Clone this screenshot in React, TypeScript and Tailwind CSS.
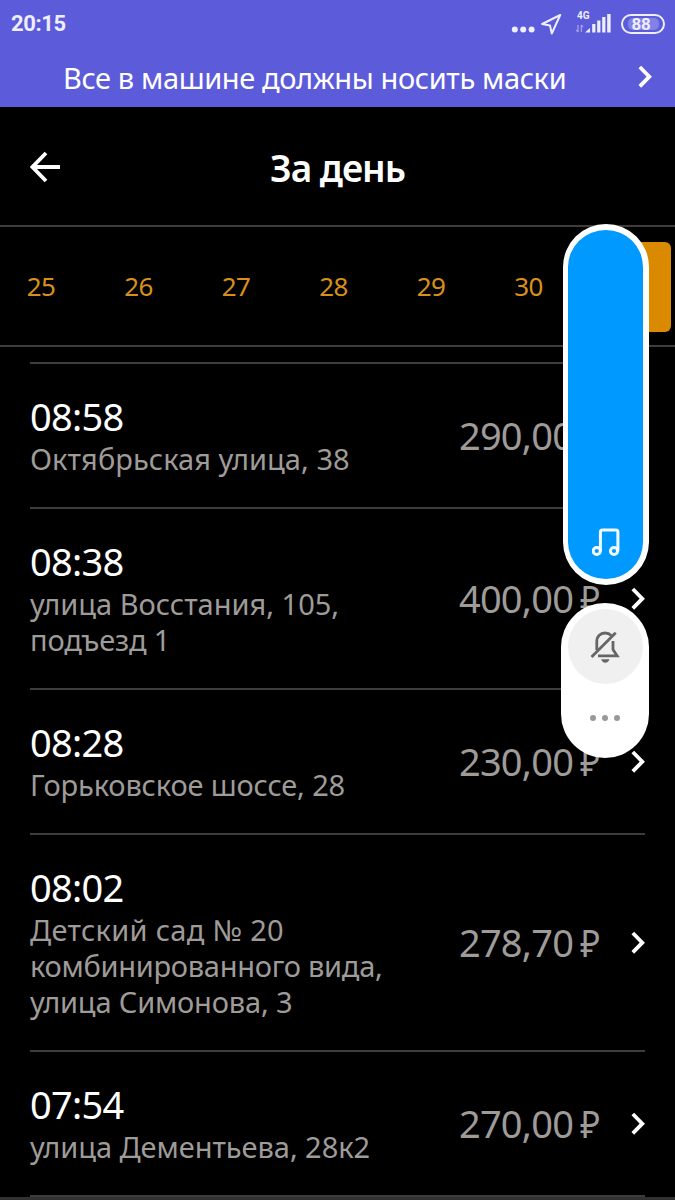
type AddressLine = {
  text: string;
  tracking?: string;
};

type Trip = {
  time: string;
  address: AddressLine[];
  price: string;
};

const days = [25, 26, 27, 28, 29, 30];

const trips: Trip[] = [
  { time: "08:58", address: [{ text: "Октябрьская улица, 38", tracking: "tracking-[0.05px]" }], price: "290,00" },
  {
    time: "08:38",
    address: [{ text: "улица Восстания, 105," }, { text: "подъезд 1", tracking: "tracking-[-0.15px]" }],
    price: "400,00",
  },
  { time: "08:28", address: [{ text: "Горьковское шоссе, 28", tracking: "tracking-[-0.15px]" }], price: "230,00" },
  {
    time: "08:02",
    address: [
      { text: "Детский сад № 20", tracking: "tracking-[0.3px]" },
      { text: "комбинированного вида,", tracking: "tracking-[-0.28px]" },
      { text: "улица Симонова, 3", tracking: "tracking-[-0.17px]" },
    ],
    price: "278,70",
  },
  { time: "07:54", address: [{ text: "улица Дементьева, 28к2", tracking: "tracking-[-0.05px]" }], price: "270,00" },
];

function Chevron() {
  return (
    <svg width="14" height="24" viewBox="0 0 14 24" fill="none" className="shrink-0">
      <path d="M1.8 2 11.3 11.7 1.8 21.4" stroke="#fff" strokeWidth="3.8" />
    </svg>
  );
}

function StatusBar() {
  return (
    <div className="flex h-12 items-center justify-between pl-[11px] pr-[10px] text-[#eeeefc]">
      <span className="font-['Roboto',sans-serif] text-[22px] font-bold leading-none tracking-[-0.4px]">20:15</span>
      <div className="flex items-center">
        <svg width="24" height="8" viewBox="0 0 24 8" fill="currentColor" className="mt-[11px] mr-px">
          <circle cx="3.8" cy="3.5" r="3" />
          <circle cx="12.2" cy="3.5" r="3" />
          <circle cx="20.6" cy="3.5" r="3" />
        </svg>
        <svg width="22" height="22" viewBox="0 0 22 22" fill="none" className="ml-[5px]">
          <path
            d="M19.2 2 1.2 11l7.8 1.6 1.8 7.9z"
            stroke="currentColor"
            strokeWidth="2"
            strokeLinejoin="round"
          />
        </svg>
        <div className="ml-[13px] flex h-6 w-9 flex-col">
          <span className="h-[9px] pl-[1px] font-['Roboto',sans-serif] text-[10px] font-bold leading-[7px]">4G</span>
          <svg width="36" height="24" viewBox="0 0 36 24" className="mt-[-9px]" fill="currentColor">
            <g stroke="currentColor" strokeWidth="1.2" fill="none" opacity=".5">
              <path d="M2 13v7M0 18l2 2M5.3 20v-7M7 15l-1.7-2" />
            </g>
            <path d="M9 20.5 14 16v4.5z" />
            <rect x="16.2" y="12" width="3.2" height="8.5" />
            <rect x="21.2" y="8.5" width="3.2" height="12" />
            <rect x="26.2" y="5" width="3.2" height="15.5" />
            <rect x="31.2" y="2" width="3.4" height="18.5" />
          </svg>
        </div>
        <div className="ml-[9px] flex h-5 w-11 items-center justify-center rounded-full border-2 border-current">
          <div className="flex h-3 w-[31px] items-center justify-center rounded-[5px] bg-[#8281e6] pr-[4px]">
            <span className="font-['Roboto',sans-serif] text-[17px] font-bold leading-none tracking-[-0.3px]">88</span>
          </div>
        </div>
      </div>
    </div>
  );
}

function TripRow({ trip }: { trip: Trip }) {
  return (
    <li className="flex items-center border-t-2 border-[#3f3d3c] pt-[31px] pb-[30px]">
      <div className="flex-1">
        <div className="mb-[3px] text-[38px] leading-[43px] tracking-[-0.7px] text-white">{trip.time}</div>
        {trip.address.map((line) => (
          <div
            key={line.text}
            className={`whitespace-nowrap text-[29px] leading-9 text-[#9e9b98] ${line.tracking ?? ""}`}
          >
            {line.text}
          </div>
        ))}
      </div>
      <div className="flex w-[141px] items-center justify-between pb-[2px] text-[38px] leading-[43px] text-[#9e9b98]">
        <span className="tracking-[-0.8px]">{trip.price}</span>
        <span className="origin-right scale-x-[0.9]">₽</span>
      </div>
      <div className="ml-[31px]">
        <Chevron />
      </div>
    </li>
  );
}

function VolumePanel() {
  return (
    <div className="absolute left-[561px] top-[224px] flex w-[88px] flex-col items-end">
      <div className="flex h-[361px] w-[86px] items-end justify-center rounded-full border-[6px] border-l-[5px] border-white bg-[#0099ff] pb-[22px]">
        <svg width="28" height="29" viewBox="0 0 28 29" fill="none" stroke="#f2fbff" strokeWidth="3">
          <circle cx="4.8" cy="23" r="3.6" />
          <circle cx="22" cy="23" r="3.6" />
          <path d="M8.4 23V4a2 2 0 0 1 2-2h13.5a2 2 0 0 1 2 2v19" />
        </svg>
      </div>
      <div className="mt-[18px] flex h-[155px] w-[88px] flex-col items-center rounded-full bg-white pt-[6px]">
        <div className="flex size-[75px] items-center justify-center rounded-full bg-[#f0f0f0]">
          <svg width="30" height="34" viewBox="0 0 30 34" fill="none" stroke="#666" strokeWidth="2.8">
            <path d="M1.5 27 25.7 2.8" />
            <path d="M6.8 20v-8.5C6.8 6 10.5 3 15 3c2.5 0 4.6.8 6.2 2.4" />
            <path d="M23 11v8.5l4.2 6.4H8" />
            <path d="M11.2 29.3h8.2c-.6 2.2-2 3.4-4.1 3.4s-3.5-1.2-4.1-3.4z" fill="#666" stroke="none" />
          </svg>
        </div>
        <div className="mt-[31px] flex gap-[6px]">
          <span className="size-[6px] rounded-full bg-[#999]" />
          <span className="size-[6px] rounded-full bg-[#999]" />
          <span className="size-[6px] rounded-full bg-[#999]" />
        </div>
      </div>
    </div>
  );
}

export default function App() {
  return (
    <div className="relative flex h-[1200px] w-[675px] flex-col overflow-hidden bg-black font-['Noto_Sans',sans-serif]">
      <div className="h-[107px] shrink-0 bg-[#5c5bda]">
        <StatusBar />
        <div className="flex h-[58px] items-center justify-between pl-[63px] pr-[23px] text-white">
          <span className="whitespace-nowrap text-[29px] leading-none tracking-[-0.38px]">
            Все в машине должны носить маски
          </span>
          <Chevron />
        </div>
      </div>

      <header className="grid h-[120px] shrink-0 grid-cols-[60px_1fr_60px] items-center border-b-2 border-[#3f3d3c] pl-[30px] pr-[30px] pt-px">
        <svg width="31" height="32" viewBox="0 0 31 32" fill="none" stroke="#fff" strokeWidth="3.8">
          <path d="M30 16H3M16 2 2.5 16 16 30" />
        </svg>
        <h1 className="pt-[2px] text-center text-[37px] font-semibold leading-none tracking-[-1px] text-white">
          За день
        </h1>
      </header>

      <nav className="flex h-[120px] shrink-0 items-center gap-[7.5px] border-b-2 border-[#3f3d3c] pt-px text-[26px] tracking-[-0.5px] text-[#d8901c]">
        {days.map((day) => (
          <div key={day} className="w-[90px] shrink-0 text-center first:-ml-1">
            {day}
          </div>
        ))}
        <div className="h-[90px] w-[90px] shrink-0 rounded-md bg-[#d98a00]" />
      </nav>

      <ul className="mx-[30px] mt-[15px] shrink-0">
        {trips.map((trip) => (
          <TripRow key={trip.time} trip={trip} />
        ))}
        <li className="h-[2px] bg-[#3f3d3c]" />
      </ul>
      <div className="h-[3px] shrink-0 bg-[#323031]" />

      <VolumePanel />
    </div>
  );
}
